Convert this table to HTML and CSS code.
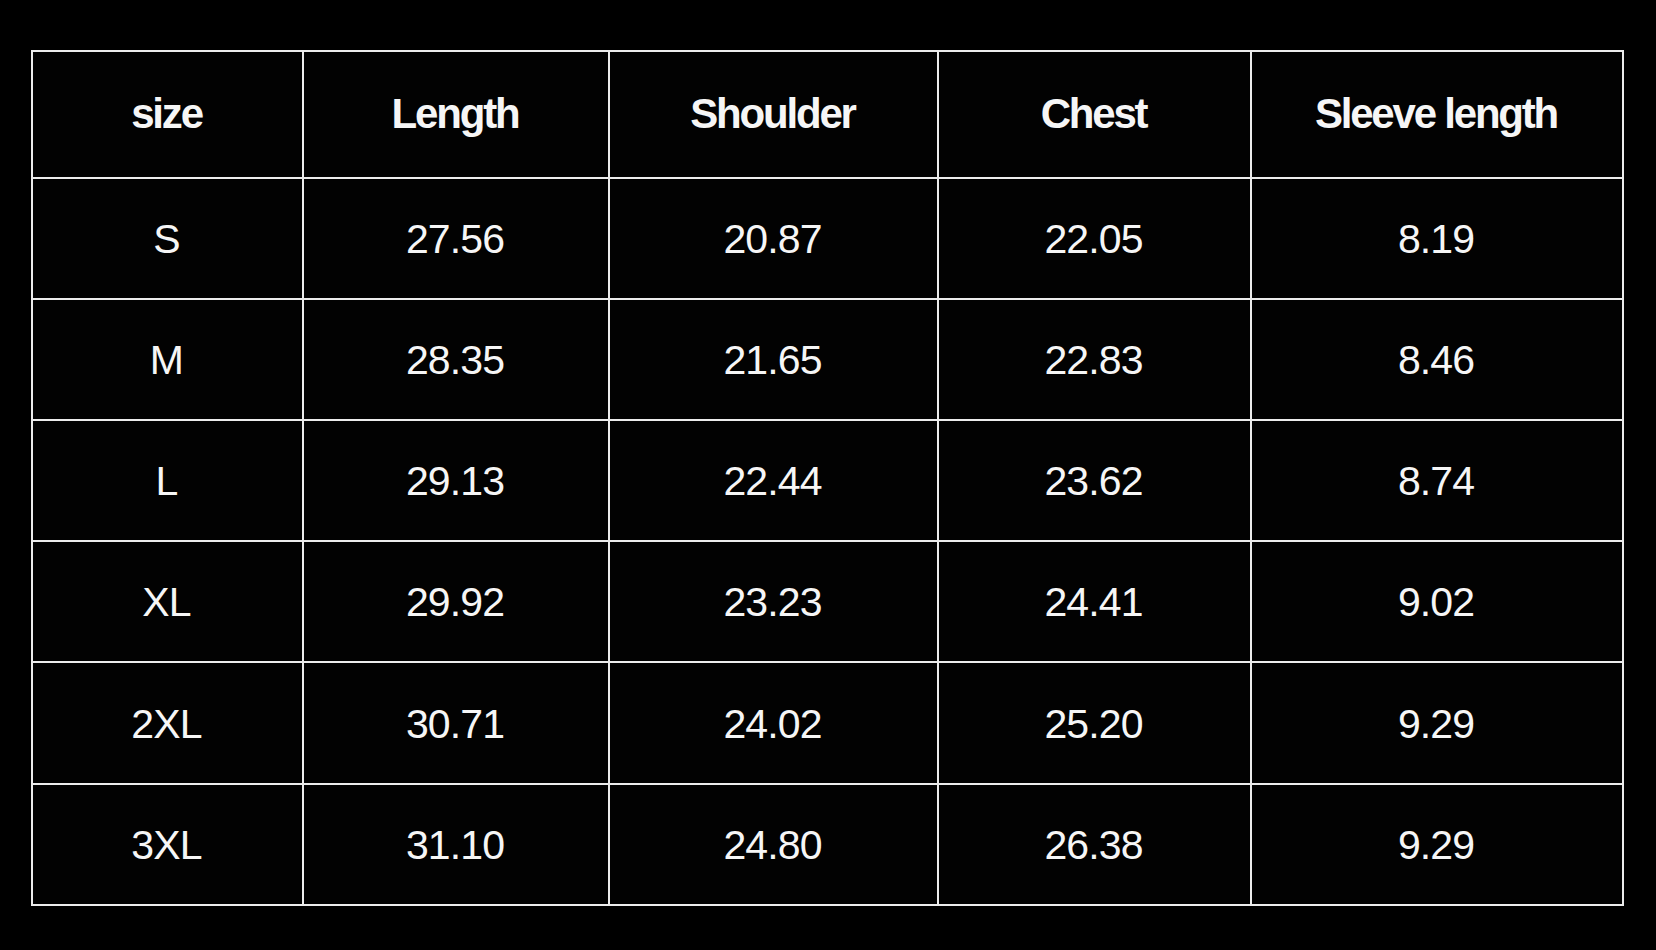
FILE: index.html
```html
<!DOCTYPE html>
<html lang="en">
<head>
<meta charset="utf-8">
<title>Size chart</title>
<link rel="stylesheet" href="styles.css">
</head>
<body>
<div class="chart">
  <div class="cell head">size</div>
  <div class="cell head">Length</div>
  <div class="cell head">Shoulder</div>
  <div class="cell head">Chest</div>
  <div class="cell head">Sleeve length</div>

  <div class="cell">S</div>
  <div class="cell">27.56</div>
  <div class="cell">20.87</div>
  <div class="cell">22.05</div>
  <div class="cell">8.19</div>

  <div class="cell">M</div>
  <div class="cell">28.35</div>
  <div class="cell">21.65</div>
  <div class="cell">22.83</div>
  <div class="cell">8.46</div>

  <div class="cell">L</div>
  <div class="cell">29.13</div>
  <div class="cell">22.44</div>
  <div class="cell">23.62</div>
  <div class="cell">8.74</div>

  <div class="cell">XL</div>
  <div class="cell">29.92</div>
  <div class="cell">23.23</div>
  <div class="cell">24.41</div>
  <div class="cell">9.02</div>

  <div class="cell">2XL</div>
  <div class="cell">30.71</div>
  <div class="cell">24.02</div>
  <div class="cell">25.20</div>
  <div class="cell">9.29</div>

  <div class="cell">3XL</div>
  <div class="cell">31.10</div>
  <div class="cell">24.80</div>
  <div class="cell">26.38</div>
  <div class="cell">9.29</div>
</div>
</body>
</html>
```
FILE: styles.css
```css
html, body {
  margin: 0;
  padding: 0;
  background: #000;
}

body {
  width: 1656px;
  height: 950px;
  overflow: hidden;
  font-family: "Liberation Sans", Arial, Helvetica, sans-serif;
}

.chart {
  margin: 50px 0 0 31px;
  width: 1593px;
  box-sizing: border-box;
  display: grid;
  grid-template-columns: 269px 304px 327px 311px 370px;
  grid-template-rows: 124.7px repeat(6, 119.2px);
  gap: 2px;
  padding: 2px;
  background: #ececec;
}

.cell {
  background: #020202;
  color: #f6f6f6;
  display: flex;
  align-items: center;
  justify-content: center;
  font-size: 41px;
  letter-spacing: -0.9px;
  line-height: 1;
  padding: 2px 2px 0 0;
}

.head {
  font-weight: 700;
  font-size: 42px;
  letter-spacing: -2.2px;
  padding: 0 2px 0 0;
}
```
